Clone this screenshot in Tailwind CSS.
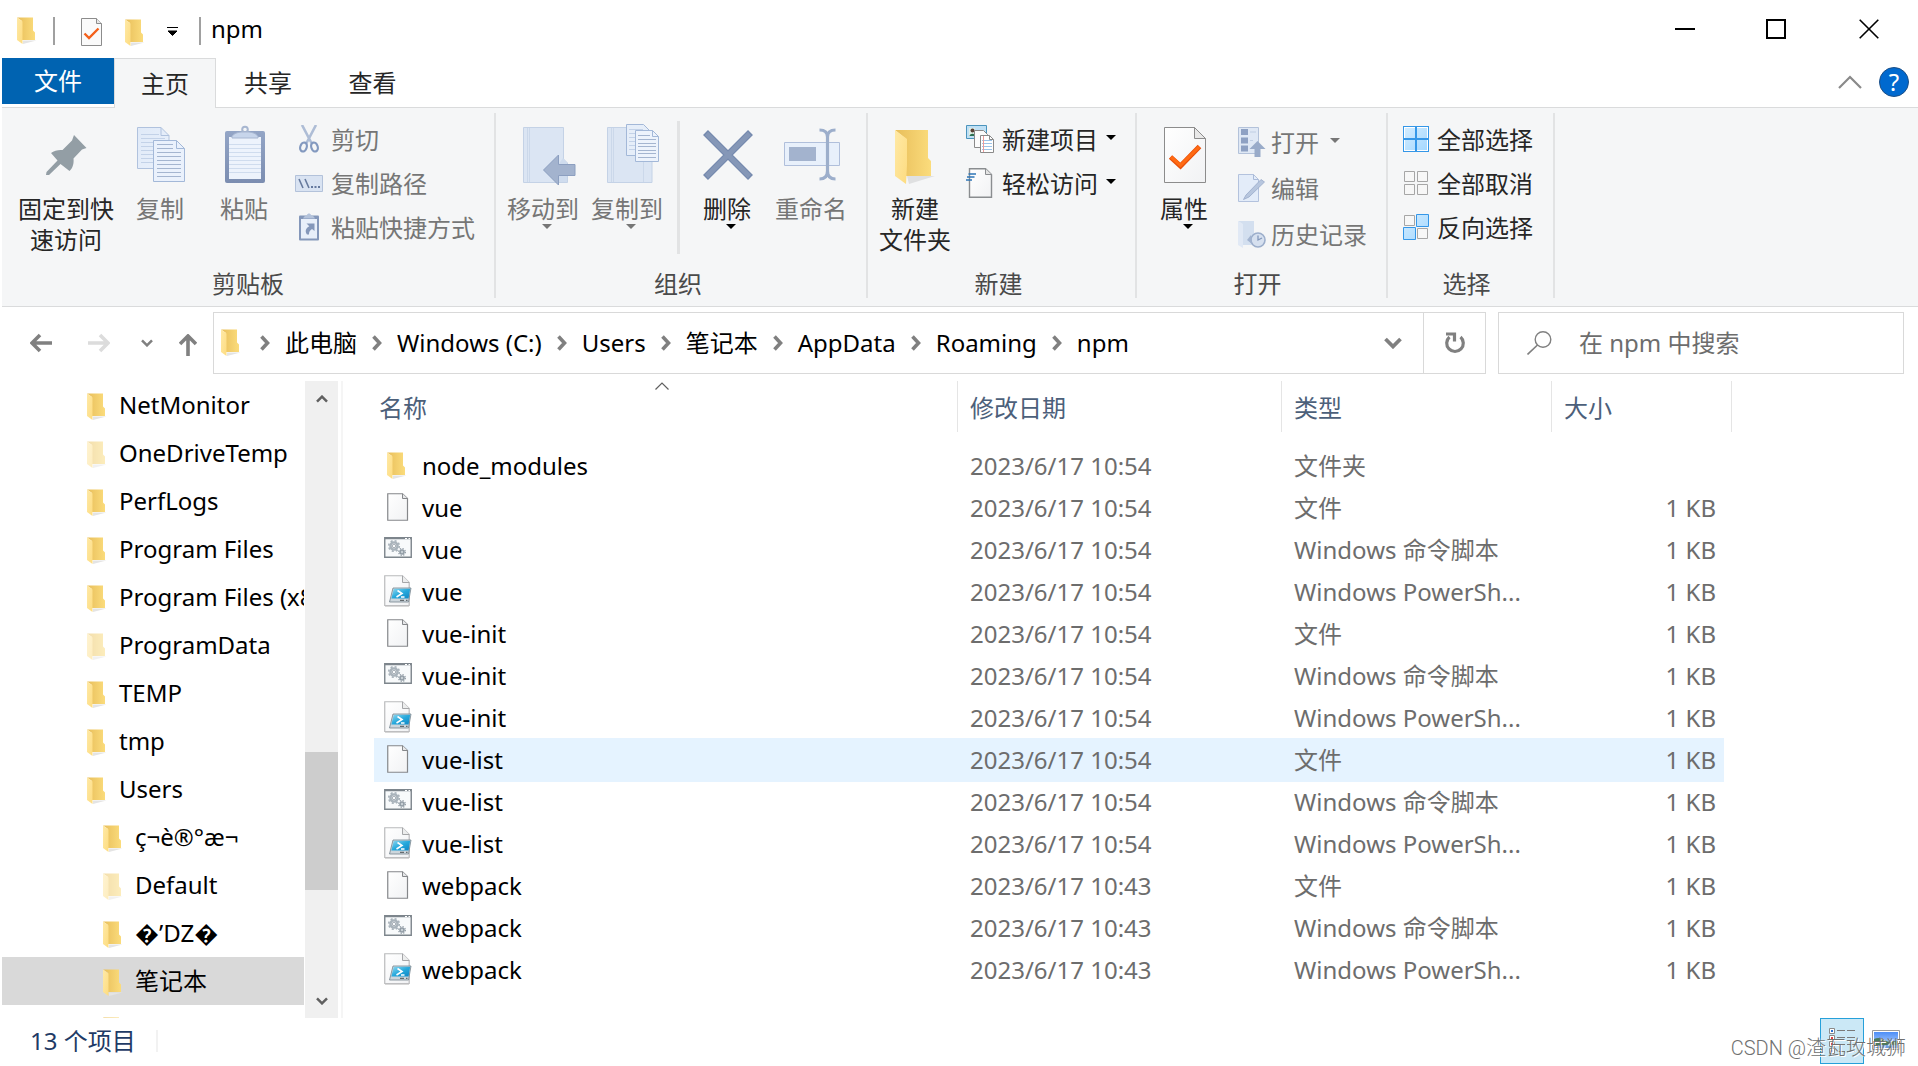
<!DOCTYPE html>
<html lang="zh-CN">
<head>
<meta charset="utf-8">
<title>npm</title>
<meta name="viewport" content="width=device-width, initial-scale=1">
<script src="https://cdn.jsdelivr.net/npm/@tailwindcss/browser@4"></script>
</head>
<body class="flex h-screen flex-col overflow-hidden bg-white pl-0.5 font-['Noto_Sans','Noto_Sans_CJK_SC',sans-serif] text-2xl text-black">

<!-- Shared icon definitions -->
<svg class="absolute h-0 w-0" aria-hidden="true">
  <defs>
    <linearGradient id="gFront" x1="0" x2="1" y1="0" y2="1"><stop offset="0" stop-color="#ffe9a6"/><stop offset="1" stop-color="#fddc80"/></linearGradient>
    <linearGradient id="gBack" x1="0" x2="1"><stop offset="0" stop-color="#e8be5a"/><stop offset="1" stop-color="#fbdc7c"/></linearGradient>
    <linearGradient id="gPage" x1="0" x2="1" y1="0" y2="1"><stop offset="0" stop-color="#ffffff"/><stop offset="1" stop-color="#f1f2f4"/></linearGradient>
    <linearGradient id="gBlue" x1="0" x2="1" y1="0" y2="1"><stop offset="0" stop-color="#e0eaf8"/><stop offset="1" stop-color="#e9f0fb"/></linearGradient>
    <linearGradient id="gClip" x1="0" x2="0" y1="0" y2="1"><stop offset="0" stop-color="#93a5c6"/><stop offset="1" stop-color="#7b8db0"/></linearGradient>
    <linearGradient id="gPs" x1="0" x2="1" y1="0" y2="1"><stop offset="0" stop-color="#8fd8f0"/><stop offset=".5" stop-color="#27a9dc"/><stop offset="1" stop-color="#0f86c4"/></linearGradient>
    <linearGradient id="gSel" x1="0" x2="1" y1="0" y2="1"><stop offset="0" stop-color="#d2ecff"/><stop offset="1" stop-color="#a5d8ff"/></linearGradient>
    <linearGradient id="gSky" x1="0" x2="0" y1="0" y2="1"><stop offset="0" stop-color="#4d8ef7"/><stop offset="1" stop-color="#c4dcfb"/></linearGradient>
  </defs>
  <symbol id="folder" viewBox="0 0 20 28">
    <path d="M6 23.500H19.500L6 27Z" fill="#e4e4e4"/>
    <path d="M0 .5H16V13.500L18 15.500V23H5V4Z" fill="url(#gBack)"/>
    <path d="M0 .5L5.500 4.500V21.500L5.500 27L0 23Z" fill="url(#gFront)"/>
  </symbol>
  <symbol id="file" viewBox="0 0 22 28">
    <path d="M.75 .75H15.500L20.500 5.500V27.250H.75Z" fill="url(#gPage)" stroke="#85878a" stroke-width="1.200"/>
    <path d="M15.500 .75V5.500H20.500" fill="#e6e7e9" stroke="#85878a"/>
  </symbol>
  <symbol id="script" viewBox="0 0 28 21">
    <path d="M.75 .75H27.250V20.250H.75Z" fill="#f8fafb" stroke="#7d858c" stroke-width="1.400"/>
    <path d="M1 1.500H27" stroke="#7d858c" stroke-width="1.500"/>
    <path d="M21 1.500H23M24.500 1.500H26" stroke="#fff"/>
    <circle cx="10" cy="9" r="3.600" fill="none" stroke="#a9b3bb" stroke-width="2.400"/>
    <circle cx="10" cy="9" r="5.300" fill="none" stroke="#a9b3bb" stroke-width="1.600" stroke-dasharray="2.080 2.080"/>
    <circle cx="10" cy="9" r="1.800" fill="none" stroke="#8b969f" stroke-width=".8"/>
    <circle cx="18" cy="15" r="2" fill="#c8d0d5" stroke="#929da6" stroke-width="1.600"/>
    <circle cx="18" cy="15" r="3.400" fill="none" stroke="#929da6" stroke-width="1.200" stroke-dasharray="1.340 1.340"/>
  </symbol>
  <symbol id="powershell" viewBox="0 0 28 32">
    <path d="M.75 .75H18.500L25.200 7.500V30.500H.75Z" fill="url(#gPage)" stroke="#b9babc" stroke-width="1.200"/>
    <path d="M18.500 .75V7.500H25.200" fill="#eceded" stroke="#a5a6a8"/>
    <path d="M1 31.300H25" stroke="#cfcfcf"/>
    <path d="M9 13H27L24.500 27H5.500Z" fill="#cdd6dc" stroke="#74838d" stroke-width=".8"/>
    <path d="M9.800 13.800H26.200L24.600 23.500H7.300Z" fill="url(#gPs)"/>
    <path d="M13.500 15.500L18 18.500L12.500 22M17 22H20.500" fill="none" stroke="#fff" stroke-width="1.600"/>
    <path d="M16 25.300H20M22 25.300H23.500" stroke="#4a4f53"/>
  </symbol>
  <symbol id="properties" viewBox="0 0 42 56">
    <path d="M.5 .5H30.500L41.500 11.500V55.500H.5Z" fill="url(#gPage)" stroke="#8c8c8c"/>
    <path d="M30.500 .5V11.500H41.500Z" fill="#e8e8e8" stroke="#8c8c8c"/>
    <path d="M6.500 30L16.500 39L35.500 19.500" fill="none" stroke="#e8500a" stroke-width="5"/>
    <path d="M7 30L16.500 38.300L35 19.800" fill="none" stroke="#ff6a13" stroke-width="3.200"/>
  </symbol>
  <symbol id="chev-down" viewBox="0 0 18 12"><path d="M1.500 2L9 9.500L16.500 2" fill="none" stroke="currentColor" stroke-width="3.800"/></symbol>
  <symbol id="chev-right" viewBox="0 0 10 16"><path d="M1.500 1.500L7.500 8L1.500 14.500" fill="none" stroke="currentColor" stroke-width="3.600"/></symbol>
  <symbol id="caret" viewBox="0 0 10 5"><path d="M0 0H10L5 5Z" fill="currentColor"/></symbol>
</svg>

<!-- Title bar -->
<header class="flex h-[58px] shrink-0 items-center">
  <svg class="ml-[15px] mt-1 h-7 w-5"><use href="#folder"/></svg>
  <span class="ml-4 mt-1 h-7 w-0.5 bg-[#a0a0a0]"></span>
  <button class="ml-[26px] mt-1.5" aria-label="属性"><svg class="h-7 w-[21px]" viewBox="0 0 21 28"><path d="M.5 .5H15.500L20.500 5.500V27.500H.5Z" fill="#fafafa" stroke="#8c8c8c"/><path d="M15.500 .5V5.500H20.500" fill="#e8e8e8" stroke="#8c8c8c"/><path d="M3.500 15.500L8 20L17.500 10.500" fill="none" stroke="#f4601a" stroke-width="2.400"/></svg></button>
  <button class="ml-[23px] mt-2" aria-label="新建文件夹"><svg class="h-7 w-5"><use href="#folder"/></svg></button>
  <button class="ml-[22px] mt-1" aria-label="自定义快速访问工具栏"><svg class="h-[9px] w-[11px]" viewBox="0 0 11 9"><path d="M0 .5H11M1 4H10L5.500 8.500Z" fill="#000" stroke="#000" stroke-width="1"/></svg></button>
  <span class="ml-[21px] mt-1 h-7 w-0.5 bg-[#a0a0a0]"></span>
  <h1 class="ml-2.5 leading-8">npm</h1>
  <div class="ml-auto flex items-center pr-[39px]">
    <button aria-label="最小化"><svg class="h-5 w-5" viewBox="0 0 20 20"><path d="M0 10H20" stroke="#000" stroke-width="2"/></svg></button>
    <button class="ml-[71px]" aria-label="最大化"><svg class="h-5 w-5" viewBox="0 0 20 20"><path d="M1 1H19V19H1Z" fill="none" stroke="#000" stroke-width="2"/></svg></button>
    <button class="ml-[73px]" aria-label="关闭"><svg class="h-5 w-5" viewBox="0 0 20 20"><path d="M.7 .7L19.300 19.300M19.300 .7L.7 19.300" stroke="#000" stroke-width="1.600"/></svg></button>
  </div>
</header>

<!-- Ribbon tabs -->
<nav class="flex h-[50px] shrink-0 border-b border-[#dadbdc] text-[#262626]">
  <button class="h-[46px] w-28 bg-[#0063b1] text-white">文件</button>
  <button class="h-[50px] w-[102px] border border-b-0 border-[#dadbdc] bg-[#f5f6f7]">主页</button>
  <button class="w-[104px]">共享</button>
  <button class="w-[105px]">查看</button>
  <div class="ml-auto flex items-center gap-[17px] pb-0.5 pr-[9px]">
    <button aria-label="折叠功能区"><svg class="h-4 w-6" viewBox="0 0 24 16"><path d="M1 14L12 3L23 14" fill="none" stroke="#8a8a8a" stroke-width="2.200"/></svg></button>
    <button class="h-[30px] w-[30px] rounded-full border border-[#1c4f86] bg-[#0069cf] leading-7 text-white" aria-label="帮助">?</button>
  </div>
</nav>

<!-- Ribbon -->
<section class="flex h-[199px] shrink-0 border-b border-[#dadbdc] bg-[#f5f6f7] pb-2 pt-[5px] leading-[31px] text-[#262626]" aria-label="功能区">

  <div class="flex w-[494px] flex-col border-r-2 border-[#e2e3e4]">
    <div class="flex grow pl-4">
      <button class="flex w-24 flex-col items-center pt-3">
        <svg class="mb-2 h-[60px] w-[42px]" viewBox="0 0 42 60"><path d="M29 10L41.500 23L37 24.500L28.500 33.500C29 38 28 43 24.500 46L15.500 39L4 50L1 50L1.500 47L12.500 35.500L6 28C9 25.500 14 24.500 17.500 25L27 15.500Z" fill="#939ea5"/></svg>
        <span>固定到快<br>速访问</span>
      </button>
      <button class="ml-1 flex w-[84px] flex-col items-center pt-3 text-[#767676]">
        <svg class="mb-2 ml-0.5 h-[60px] w-12" viewBox="0 0 48 60"><path d="M.5 2.500H24L32 10.500V43.500H.5Z" fill="url(#gBlue)" stroke="#b0c2de"/><path d="M24 2.500V10.500H32" fill="none" stroke="#b0c2de"/><path d="M4 9.500H22M4 13.500H28M4 17.500H28M4 21.500H16M4 25.500H16M4 29.500H16M4 33.500H16M4 37.500H16" stroke="#c3d2e8"/><path d="M16.500 15.500H39.500L47.500 23.500V56.500H16.500Z" fill="#eaf1fc" stroke="#a3b8d8"/><path d="M39.500 15.500V23.500H47.500" fill="none" stroke="#a3b8d8"/><path d="M20 19.500H36M20 23.500H36M20 27.500H44M20 31.500H44M20 35.500H44M20 39.500H44M20 43.500H44M20 47.500H44M20 51.500H44" stroke="#a4b5d0"/></svg>
        <span>复制</span>
      </button>
      <button class="flex w-[84px] flex-col items-center pt-3 text-[#767676]">
        <svg class="mb-2 ml-0.5 h-[60px] w-10" viewBox="0 0 40 60"><rect y="6" width="40" height="52" rx="2" fill="url(#gClip)"/><path d="M4 12H36V54H4Z" fill="#edf3fc"/><path d="M4 19.500H36M4 23.500H36M4 27.500H36M4 31.500H36M4 35.500H36M4 39.500H36M4 43.500H36M4 47.500H36" stroke="#cfdcee"/><circle cx="20" cy="4.500" r="2.800" fill="none" stroke="#a7b6d0" stroke-width="2"/><path d="M7 11.500C9 8 13 7.500 16 7H24C27 7.500 31 8 33 11.500V13H7Z" fill="#c7d5eb" stroke="#a7b6d0"/></svg>
        <span>粘贴</span>
      </button>
      <div class="ml-[9px] flex flex-col pt-1 text-[#767676]">
        <button class="flex h-11 items-center gap-2"><svg class="h-7 w-7" viewBox="0 0 28 28"><path d="M7 0L17 19M21 0L11 19" stroke="#aebdd6" stroke-width="2.600"/><ellipse cx="8.500" cy="22" rx="3.200" ry="4.600" fill="none" stroke="#8399bf" stroke-width="2.200" transform="rotate(18 8.500 22)"/><ellipse cx="19.500" cy="22" rx="3.200" ry="4.600" fill="none" stroke="#8399bf" stroke-width="2.200" transform="rotate(-18 19.500 22)"/></svg>剪切</button>
        <button class="flex h-11 items-center gap-2"><svg class="h-[17px] w-7" viewBox="0 0 28 17"><path d="M.5 .5H27.500V16.500H.5Z" fill="#d9e3f2" stroke="#b3c2da"/><path d="M4 4L8 13M10 4L14 13" stroke="#65799d" stroke-width="1.600"/><path d="M16 12H18M19.500 12H21.500M23 12H25" stroke="#65799d" stroke-width="2"/></svg>复制路径</button>
        <button class="flex h-11 items-center gap-2"><svg class="h-7 w-7" viewBox="0 0 28 28"><rect x="4" y="2.500" width="20" height="25" rx="1" fill="#8497ba"/><path d="M6 6H22V25.500H6Z" fill="#e8effa"/><path d="M8 5.500C9 3 11 2.500 12 2C12.500 0 15.500 0 16 2C17 2.500 19 3 20 5.500Z" fill="#b4c3db"/><path d="M11.500 10.500H19.500V18L17 16C14.500 17.500 14 19 14 21.500L12 21.500C9.500 18 11 15 14.300 13.300Z" fill="#8497ba"/></svg>粘贴快捷方式</button>
      </div>
    </div>
    <div class="text-center leading-7 text-[#4a4a4a]">剪贴板</div>
  </div>

  <div class="flex w-[372px] flex-col border-r-2 border-[#e2e3e4]">
    <div class="flex grow pl-[5px]">
      <button class="flex w-[84px] flex-col items-center pt-3 text-[#767676]">
        <svg class="mb-2 ml-3 h-[60px] w-[54px]" viewBox="0 0 54 60"><path d="M1.500 2.500H41.500V34L45.500 38V57.500H1.500Z" fill="#dbe5f3" stroke="#c4d2e6"/><path d="M5.500 3V57M7.500 3V57" stroke="#cbd8ea"/><path d="M41 33L36 40V57H45V38Z" fill="#cfdcee"/><path d="M21.500 45L36.500 30V39.500H53V50.500H36.500V60Z" fill="#a3b3ce" stroke="#8c9fc0"/></svg>
        <span>移动到</span><svg class="ml-2 h-[5px] w-2.5"><use href="#caret"/></svg>
      </button>
      <button class="flex w-[84px] flex-col items-center pt-3 text-[#767676]">
        <svg class="mb-2 ml-3 h-[60px] w-[54px] overflow-visible" viewBox="0 0 54 60"><path d="M1.500 2.500H40.500V36H46V57.500H1.500Z" fill="#dbe5f3" stroke="#c4d2e6"/><path d="M5.500 3V57M7.500 3V57M37.500 36V57" stroke="#cbd8ea"/><path d="M20.500 -.5H37.500L43.500 5.500V30.500H20.500Z" fill="#e6eef9" stroke="#a3b8d8"/><path d="M23 4.500H37M23 8.500H30M23 12.500H30M23 16.500H30M23 20.500H30M23 24.500H30" stroke="#c3d2e8"/><path d="M29.500 5.500H46.500L52.500 11.500V36.500H29.500Z" fill="#edf3fc" stroke="#a3b8d8"/><path d="M46.500 5.500V11.500H52.500" fill="none" stroke="#a3b8d8"/><path d="M32 10.500H44M32 14.500H50M32 18.500H50M32 21.500H50M32 25.500H50M32 28.500H50M32 32.500H50" stroke="#a4b5d0"/></svg>
        <span>复制到</span><svg class="ml-2 h-[5px] w-2.5"><use href="#caret"/></svg>
      </button>
      <span class="ml-2 mt-2 h-[133px] w-[3px] bg-[#e2e3e4]"></span>
      <button class="ml-[5px] flex w-[84px] flex-col items-center pt-3">
        <svg class="mb-2 ml-0.5 h-[60px] w-[50px]" viewBox="0 0 50 60"><path d="M2.500 7.500L47.500 52.500M47.500 7.500L2.500 52.500" stroke="#7489ae" stroke-width="7"/><path d="M3.500 8.500L46.500 51.500M46.500 8.500L3.500 51.500" stroke="#8597b7" stroke-width="4.600"/></svg>
        <span>删除</span><svg class="ml-2 h-[5px] w-2.5 text-black"><use href="#caret"/></svg>
      </button>
      <button class="flex w-[84px] flex-col items-center pt-3 text-[#767676]">
        <svg class="mb-2 ml-0.5 h-[60px] w-14" viewBox="0 0 56 60"><path d="M.5 17.500H55.500V40.500H.5Z" fill="#e8f0fb" stroke="#b0bfdb"/><path d="M5 22H32V36H5Z" fill="#a3b3ce"/><path d="M35.500 5C41 5 43.500 7.500 43.500 12V46C43.500 51 41 54 35.500 54M51.500 5C46 5 43.500 7.500 43.500 12M43.500 46C43.500 51 46 54 51.500 54" fill="none" stroke="#9caecb" stroke-width="3.200"/></svg>
        <span>重命名</span>
      </button>
    </div>
    <div class="pr-1.5 text-center leading-7 text-[#4a4a4a]">组织</div>
  </div>

  <div class="flex w-[269px] flex-col border-r-2 border-[#e2e3e4]">
    <div class="flex grow pl-[5px]">
      <button class="flex w-[84px] flex-col items-center pt-3">
        <svg class="mb-2 h-[60px] w-10" viewBox="0 0 40 60"><path d="M12 51H40L14 59Z" fill="#dfe0e1"/><path d="M0 5H33V33L36 36V51H11V14Z" fill="url(#gBack)"/><path d="M0 5L12 14V40L11 59L0 51Z" fill="url(#gFront)"/></svg>
        <span>新建<br>文件夹</span>
      </button>
      <div class="ml-[9px] flex flex-col pt-1">
        <button class="flex h-11 items-center gap-2"><svg class="h-7 w-7" viewBox="0 0 28 28"><path d="M.5 .5H20.500V13.500H.5Z" fill="#bfe0f5" stroke="#4b94bd"/><path d="M3 3H9V11H3Z" fill="#dfeee6"/><circle cx="6.500" cy="5.500" r="2" fill="#5a4035"/><path d="M3.500 11C4 8 9 8 9.500 11Z" fill="#2c6f4e"/><path d="M8.500 5.500H17.500L21.500 9.500V22.500H8.500Z" fill="#fbfbfb" stroke="#8a8a8a"/><path d="M14.500 10.500H23.500L27.500 14.500V27.500H14.500Z" fill="#fff" stroke="#8a8a8a"/><path d="M23.500 10.500V14.500H27.500" fill="none" stroke="#8a8a8a"/><path d="M16 15.500H26M16 18.500H26M16 21.500H26M16 24.500H26" stroke="#9cc3e8"/><path d="M17.500 11V27" stroke="#ee9a9a"/></svg>新建项目<svg class="mb-1 h-[5px] w-2.5 text-black"><use href="#caret"/></svg></button>
        <button class="flex h-11 items-center gap-2"><svg class="h-[30px] w-7" viewBox="0 0 28 30"><path d="M3.500 .7H19.500L25.500 6.500V29.300H3.500Z" fill="url(#gPage)" stroke="#8a8d90" stroke-width="1.400"/><path d="M19.500 .7V6.500H25.500" fill="#e4e4e4" stroke="#8a8d90"/><path d="M2.500 6H10M1 9H8.500M-.5 12H6" stroke="#2e75b6" stroke-width="1.600"/></svg>轻松访问<svg class="mb-1 h-[5px] w-2.5 text-black"><use href="#caret"/></svg></button>
      </div>
    </div>
    <div class="pr-1.5 text-center leading-7 text-[#4a4a4a]">新建</div>
  </div>

  <div class="flex w-[251px] flex-col border-r-2 border-[#e2e3e4]">
    <div class="flex grow pl-[5px]">
      <button class="flex w-[84px] flex-col items-center pt-3">
        <svg class="mb-2.5 ml-0.5 mt-0.5 h-14 w-[42px]"><use href="#properties"/></svg>
        <span>属性</span><svg class="ml-2 h-[5px] w-2.5 text-black"><use href="#caret"/></svg>
      </button>
      <div class="ml-3 flex flex-col pt-1.5 text-[#767676]">
        <button class="flex h-[46px] items-center gap-[5px]"><svg class="h-[30px] w-7" viewBox="0 0 28 30"><path d="M.5 .5H20.500V26.500H.5Z" fill="#dfe8f5" stroke="#b3c2da"/><path d="M3 2H10V8H3ZM3 10.500H10V16.500H3ZM3 18.500H10V24.500H3Z" fill="#8ea1c3"/><path d="M12 5H18M12 13.500H15" stroke="#c0cee3"/><path d="M19.500 14L27.500 22H22.500V30H16.500V22H11.500Z" fill="#99abc9"/></svg>打开<svg class="mb-1 ml-1.5 h-[5px] w-2.5"><use href="#caret"/></svg></button>
        <button class="flex h-[46px] items-center gap-[5px]"><svg class="h-7 w-7" viewBox="0 0 28 28"><path d="M.5 .5H15.500L20.500 5.500V27.500H.5Z" fill="#e3ecf9" stroke="#b3c2dd"/><path d="M15.500 .5V5.500H20.500" fill="none" stroke="#a9bad8"/><path d="M8 21L23 5.500L26.500 8L11 23L5.500 25.500Z" fill="#b7c6de" stroke="#98aac9" stroke-width=".8"/></svg>编辑</button>
        <button class="flex h-[46px] items-center gap-[5px]"><svg class="h-7 w-7" viewBox="0 0 28 28"><path d="M0 1H16V25H4V4Z" fill="#d3dfef"/><path d="M0 1L5 4V28L0 25Z" fill="#e1e9f5"/><circle cx="20" cy="20" r="7" fill="#d6e0ef" stroke="#9caecb" stroke-width="1.600"/><path d="M20 15.500V20L24 18" fill="none" stroke="#8398bb" stroke-width="1.300"/><path d="M9 20L13 15L14 24Z" fill="#a3b4d0"/></svg>历史记录</button>
      </div>
    </div>
    <div class="pr-2 text-center leading-7 text-[#4a4a4a]">打开</div>
  </div>

  <div class="flex w-[167px] flex-col border-r-2 border-[#e2e3e4]">
    <div class="flex grow flex-col pl-[15px] pt-1">
      <button class="flex h-11 items-center gap-2"><svg class="h-[26px] w-[26px]" viewBox="0 0 26 26"><path d="M0 0H26V26H0Z" fill="#3597e8"/><path d="M1 1H12V12H1ZM14 1H25V12H14ZM1 14H12V25H1ZM14 14H25V25H14Z" fill="#fff"/><path d="M2 2H12V12H2ZM14 2H24V12H14ZM2 14H12V24H2ZM14 14H24V24H14Z" fill="url(#gSel)"/></svg>全部选择</button>
      <button class="flex h-11 items-center gap-2"><svg class="h-[26px] w-[26px]" viewBox="0 0 26 26"><path d="M1.500 1.500H11.500V11.500H1.500ZM14.500 1.500H24.500V11.500H14.500ZM1.500 14.500H11.500V24.500H1.500ZM14.500 14.500H24.500V24.500H14.500Z" fill="#f7f7f7" stroke="#a6a6a6"/></svg>全部取消</button>
      <button class="flex h-11 items-center gap-2"><svg class="h-[26px] w-[26px]" viewBox="0 0 26 26"><path d="M1.500 1.500H11.500V11.500H1.500ZM14.500 14.500H24.500V24.500H14.500Z" fill="#f7f7f7" stroke="#a6a6a6"/><path d="M13.500 .5H25.500V12.500H13.500ZM.5 13.500H12.500V25.500H.5Z" fill="url(#gSel)" stroke="#3597e8"/></svg>反向选择</button>
    </div>
    <div class="pr-2 text-center leading-7 text-[#4a4a4a]">选择</div>
  </div>
</section>

<!-- Address bar -->
<section class="flex h-[74px] shrink-0 items-center pb-1.5 pr-3.5 pt-1 text-[#808080]">
  <div class="flex w-[211px] shrink-0 items-center pl-7">
    <button aria-label="后退"><svg class="h-5 w-[22px]" viewBox="0 0 22 20"><path d="M2 10H22M10 2L2 10L10 18" fill="none" stroke="currentColor" stroke-width="3.600"/></svg></button>
    <button class="ml-9 text-[#dcdcdc]" aria-label="前进"><svg class="h-5 w-[22px]" viewBox="0 0 22 20"><path d="M20 10H0M12 2L20 10L12 18" fill="none" stroke="currentColor" stroke-width="3.600"/></svg></button>
    <button class="ml-[31px]" aria-label="最近浏览的位置"><svg class="h-2 w-3"><use href="#chev-down"/></svg></button>
    <button class="ml-[26px]" aria-label="上移"><svg class="mt-1 h-[22px] w-[18px]" viewBox="0 0 18 22"><path d="M9 2V22M1 10L9 2L17 10" fill="none" stroke="currentColor" stroke-width="3.600"/></svg></button>
  </div>
  <div class="flex h-[62px] grow border border-[#d9d9d9]">
    <nav class="flex grow items-center pl-[7px]" aria-label="路径">
      <svg class="mr-[19px] h-7 w-5"><use href="#folder"/></svg>
      <ol class="flex items-center gap-[15px] text-black">
        <li class="flex items-center gap-[15px]"><svg class="h-4 w-2.5 text-[#808080]"><use href="#chev-right"/></svg><a href="#">此电脑</a></li>
        <li class="flex items-center gap-[15px]"><svg class="h-4 w-2.5 text-[#808080]"><use href="#chev-right"/></svg><a href="#">Windows (C:)</a></li>
        <li class="flex items-center gap-[15px]"><svg class="h-4 w-2.5 text-[#808080]"><use href="#chev-right"/></svg><a href="#">Users</a></li>
        <li class="flex items-center gap-[15px]"><svg class="h-4 w-2.5 text-[#808080]"><use href="#chev-right"/></svg><a href="#">笔记本</a></li>
        <li class="flex items-center gap-[15px]"><svg class="h-4 w-2.5 text-[#808080]"><use href="#chev-right"/></svg><a href="#">AppData</a></li>
        <li class="flex items-center gap-[15px]"><svg class="h-4 w-2.5 text-[#808080]"><use href="#chev-right"/></svg><a href="#">Roaming</a></li>
        <li class="flex items-center gap-[15px]"><svg class="h-4 w-2.5 text-[#808080]"><use href="#chev-right"/></svg><a href="#">npm</a></li>
      </ol>
    </nav>
    <button class="w-[60px] pl-[21px]" aria-label="上一个位置"><svg class="h-3 w-[18px]"><use href="#chev-down"/></svg></button>
    <button class="flex w-[62px] items-center justify-center border-l border-[#d9d9d9]" aria-label="刷新"><svg class="h-6 w-6" viewBox="0 0 24 24"><path d="M17.500 6A8.300 8.300 0 1 1 6.500 6" fill="none" stroke="currentColor" stroke-width="3.200"/><path d="M3 3H11.500V10.500" fill="none" stroke="currentColor" stroke-width="3.200"/></svg></button>
  </div>
  <label class="ml-3 flex h-[62px] w-[406px] shrink-0 items-center border border-[#d9d9d9] pl-7">
    <svg class="h-6 w-[25px]" viewBox="0 0 25 24"><circle cx="16" cy="8.500" r="7.800" fill="none" stroke="#808080" stroke-width="1.400"/><path d="M10.500 14L.5 23.500" stroke="#808080" stroke-width="1.600"/></svg>
    <input class="ml-[27px] w-64 outline-none placeholder:text-[#6d6d6d]" type="search" placeholder="在 npm 中搜索" aria-label="搜索">
  </label>
</section>

<!-- Navigation tree and file list -->
<main class="flex min-h-0 grow">
  <nav class="h-full w-[302px] shrink-0 overflow-hidden" aria-label="导航窗格"><ul id="tree"></ul></nav>
  <div class="ml-px flex h-full w-[33px] shrink-0 flex-col items-center bg-[#f0f0f0] text-[#606060]">
    <button class="mt-3 flex h-3 items-center" aria-label="向上滚动"><svg class="h-2 w-3 rotate-180"><use href="#chev-down"/></svg></button>
    <span class="mt-[347px] h-[138px] w-full shrink-0 bg-[#cdcdcd]"></span>
    <button class="mb-[11px] mt-auto flex h-3 items-center" aria-label="向下滚动"><svg class="h-2 w-3"><use href="#chev-down"/></svg></button>
  </div>
  <div class="ml-[3px] w-0.5 shrink-0 bg-[#f5f5f5]"></div>

  <section class="min-w-0 grow overflow-hidden pl-[31px]">
    <table class="w-[1358px] table-fixed border-separate border-spacing-0 text-left text-[#6d6d6d]">
      <colgroup><col class="w-[584px]"><col class="w-[324px]"><col class="w-[270px]"><col class="w-[172px]"><col class="w-2"></colgroup>
      <thead class="text-[#4c607a]">
        <tr class="h-[51px]">
          <th class="relative border-r border-[#e5e5e5] pb-0 pl-[5px] pt-0.5 font-normal">名称<svg class="absolute left-[281px] top-px h-2 w-3.5" viewBox="0 0 14 8"><path d="M.5 7.500L7 1L13.500 7.500" fill="none" stroke="#606060" stroke-width="1.200"/></svg></th>
          <th class="border-r border-[#e5e5e5] pb-0 pl-3 pt-0.5 font-normal">修改日期</th>
          <th class="border-r border-[#e5e5e5] pb-0 pl-3 pt-0.5 font-normal">类型</th>
          <th class="border-r border-[#e5e5e5] pb-0 pl-3 pt-0.5 font-normal" colspan="2">大小</th>
        </tr>
      </thead>
      <tbody id="files"><tr class="h-[13px]"><td colspan="5"></td></tr></tbody>
    </table>
  </section>
</main>

<!-- Status bar -->
<footer class="flex h-12 shrink-0 items-start">
  <p class="ml-7 mt-[7px] leading-8 text-[#1f3b66]">13 个项目</p>
  <span class="ml-5 mt-3 h-[22px] w-0.5 bg-[#f2f2f2]"></span>
  <div class="relative ml-auto flex pr-[18px]">
    <button class="flex h-[46px] w-11 items-center justify-center border border-[#26a0da] bg-[#cbe8f6]" aria-label="详细信息"><svg class="h-[26px] w-[26px]" viewBox="0 0 26 26"><path d="M.5 .5H5.500V5.500H.5ZM.5 7.500H5.500V12.500H.5ZM.5 13.500H5.500V18.500H.5ZM.5 20.500H5.500V25.500H.5Z" fill="#fff" stroke="#8a8a8a"/><path d="M2 3H4M2 23H4" stroke="#2a6fd0" stroke-width="2"/><path d="M2 10H4M2 16H4" stroke="#e04040" stroke-width="2"/><path d="M8 2.500H16M18 2.500H26M8 9.500H16M18 9.500H26M8 16.500H16M18 16.500H26M8 23.500H16M18 23.500H26" stroke="#7a7a7a"/></svg></button>
    <button class="ml-2 mt-3 h-5 w-7" aria-label="大缩略图"><svg class="h-5 w-7" viewBox="0 0 28 20"><path d="M.5 .5H27.500V19.500H.5Z" fill="#fff" stroke="#9a9a9a"/><path d="M2 2H26V18H2Z" fill="url(#gSky)"/><path d="M2 9C6 7 10 8 14 11C18 13 22 10 26 11V15H2Z" fill="#4b7a5a"/><path d="M2 15H26V18H2Z" fill="#6f9fe0"/></svg></button>
    <span class="absolute right-3 top-4 whitespace-nowrap font-['Roboto','Noto_Sans_CJK_SC',sans-serif] text-xl font-light text-[#707070] [text-shadow:1px_1px_0_#fff]">CSDN @渣瓦攻城狮</span>
  </div>
</footer>

<script>
  // [name, nesting level, hidden folder, selected]
  const folders = [
    ['NetMonitor', 0], ['OneDriveTemp', 0, true], ['PerfLogs', 0], ['Program Files', 0],
    ['Program Files (x86)', 0], ['ProgramData', 0, true], ['TEMP', 0], ['tmp', 0], ['Users', 0],
    ['ç¬è®°æ¬', 1], ['Default', 1, true], ['\uFFFD’DZ\uFFFD', 1], ['笔记本', 1, false, true], ['', 1]
  ];
  document.getElementById('tree').innerHTML = folders.map(([name, level, dim, selected]) => `
    <li class="flex h-12 items-center gap-3 whitespace-nowrap ${level ? 'pl-[101px]' : 'pl-[85px]'} ${selected ? 'bg-[#d9d9d9]' : ''}">
      <svg class="mt-1 h-7 w-5 shrink-0 ${dim ? 'opacity-50' : ''}"><use href="#folder"/></svg>${name}
    </li>`).join('');

  const kinds = {
    folder: ['文件夹', '#folder', 'ml-[3px] mr-2 h-7 w-5'],
    file: ['文件', '#file', 'ml-[3px] mr-1.5 h-7 w-[22px] mb-0.5'],
    script: ['Windows 命令脚本', '#script', 'mr-[3px] mb-1.5 h-[21px] w-7'],
    powershell: ['Windows PowerSh...', '#powershell', 'mr-[3px] mb-0.5 h-8 w-7']
  };
  const entries = [['node_modules', 'folder', '10:54']];
  for (const [name, time] of [['vue', '10:54'], ['vue-init', '10:54'], ['vue-list', '10:54'], ['webpack', '10:43']])
    for (const kind of ['file', 'script', 'powershell']) entries.push([name, kind, time]);

  document.getElementById('files').innerHTML += entries.map(([name, kind, time], i) => {
    const [label, icon, box] = kinds[kind];
    const bg = i === 7 ? 'bg-[#e5f3ff] shadow-[0_1px_0_#e5f3ff,0_-1px_0_#e5f3ff]' : '';
    return `<tr class="h-[42px] leading-8">
      <td class="p-0 text-black ${bg}"><span class="flex items-center pl-2.5"><svg class="shrink-0 ${box}"><use href="${icon}"/></svg><span class="ml-[7px]">${name}</span></span></td>
      <td class="p-0 pl-3 ${bg}">2023/6/17 ${time}</td>
      <td class="p-0 pl-3 whitespace-nowrap ${bg}">${label}</td>
      <td class="p-0 pr-2 text-right ${bg}">${kind === 'folder' ? '' : '1 KB'}</td>
      <td class="p-0"></td>
    </tr>`;
  }).join('');
</script>
</body>
</html>
